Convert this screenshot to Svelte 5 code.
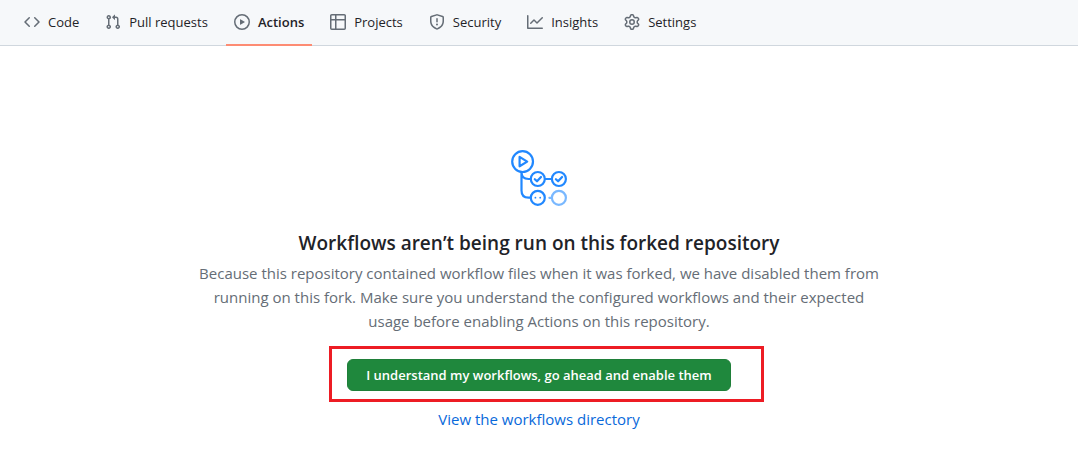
<script>
  const tabs = [
    { label: 'Code', d: 'M4.72 3.22a.75.75 0 011.06 1.06L2.06 8l3.72 3.72a.75.75 0 11-1.06 1.06L.47 8.53a.75.75 0 010-1.06l4.25-4.25zm6.56 0a.75.75 0 10-1.06 1.06L13.94 8l-3.72 3.72a.75.75 0 101.06 1.06l4.25-4.25a.75.75 0 000-1.06l-4.25-4.25z' },
    { label: 'Pull requests', d: 'M7.177 3.073L9.573.677A.25.25 0 0110 .854v4.792a.25.25 0 01-.427.177L7.177 3.427a.25.25 0 010-.354zM3.75 2.5a.75.75 0 100 1.5.75.75 0 000-1.5zm-2.25.75a2.25 2.25 0 113 2.122v5.256a2.251 2.251 0 11-1.5 0V5.372A2.25 2.25 0 011.5 3.25zM11 2.5h-1V4h1a1 1 0 011 1v5.628a2.251 2.251 0 101.5 0V5A2.5 2.5 0 0011 2.5zm1 10.25a.75.75 0 111.5 0 .75.75 0 01-1.5 0zM3.75 12a.75.75 0 100 1.5.75.75 0 000-1.5z' },
    { label: 'Actions', current: true, d: 'M1.5 8a6.5 6.5 0 1113 0 6.5 6.5 0 01-13 0zM8 0a8 8 0 100 16A8 8 0 008 0zM6.379 5.227A.25.25 0 006 5.442v5.117a.25.25 0 00.379.214l4.264-2.559a.25.25 0 000-.428L6.379 5.227z' },
    { label: 'Projects', d: 'M0 1.75C0 .784.784 0 1.75 0h12.5C15.216 0 16 .784 16 1.75v12.5A1.75 1.75 0 0114.25 16H1.75A1.75 1.75 0 010 14.25ZM6.5 6.5v8h7.75a.25.25 0 00.25-.25V6.5Zm8-1.5V1.75a.25.25 0 00-.25-.25H6.5V5Zm-13 1.5v7.75c0 .138.112.25.25.25H5v-8ZM5 5V1.5H1.75a.25.25 0 00-.25.25V5Z' },
    { label: 'Security', d: 'M7.467.133a1.75 1.75 0 011.066 0l5.25 1.68A1.75 1.75 0 0115 3.48V7c0 1.566-.32 3.182-1.303 4.682-.983 1.498-2.585 2.813-5.032 3.855a1.7 1.7 0 01-1.33 0c-2.447-1.042-4.049-2.357-5.032-3.855C1.32 10.182 1 8.566 1 7V3.48a1.75 1.75 0 011.217-1.667l5.25-1.68zm.61 1.429a.25.25 0 00-.153 0l-5.25 1.68a.25.25 0 00-.174.238V7c0 1.358.275 2.666 1.057 3.86.784 1.194 2.121 2.34 4.366 3.297a.2.2 0 00.154 0c2.245-.956 3.582-2.104 4.366-3.298C13.225 9.666 13.5 8.36 13.5 7V3.48a.25.25 0 00-.174-.237l-5.25-1.68zM9 10.5a1 1 0 11-2 0 1 1 0 012 0zm-.25-5.75a.75.75 0 10-1.5 0v3a.75.75 0 001.5 0v-3z' },
    { label: 'Insights', d: 'M1.5 1.75a.75.75 0 00-1.5 0v12.5c0 .414.336.75.75.75h14.5a.75.75 0 000-1.5H1.5V1.75zm14.28 2.53a.75.75 0 00-1.06-1.06L10 7.94 7.53 5.47a.75.75 0 00-1.06 0L3.22 8.72a.75.75 0 001.06 1.06L7 7.06l2.47 2.47a.75.75 0 001.06 0l5.25-5.25z' },
    { label: 'Settings', d: 'M7.429 1.525a6.593 6.593 0 011.142 0c.036.003.108.036.137.146l.289 1.105c.147.56.55.967.997 1.189.174.086.341.183.501.29.417.278.97.423 1.53.27l1.102-.303c.11-.03.175.016.195.046.219.31.41.641.573.989.014.031.022.11-.059.19l-.815.806c-.411.406-.562.957-.53 1.456a4.588 4.588 0 010 .582c-.032.499.119 1.05.53 1.456l.815.806c.08.08.073.159.059.19a6.494 6.494 0 01-.573.99c-.02.029-.086.074-.195.045l-1.103-.303c-.559-.153-1.112-.008-1.529.27-.16.107-.327.204-.5.29-.449.222-.851.628-.998 1.189l-.289 1.105c-.029.11-.101.143-.137.146a6.613 6.613 0 01-1.142 0c-.036-.003-.108-.037-.137-.146l-.289-1.105c-.147-.56-.55-.967-.997-1.189a4.502 4.502 0 01-.501-.29c-.417-.278-.97-.423-1.53-.27l-1.102.303c-.11.03-.175-.016-.195-.046a6.492 6.492 0 01-.573-.989c-.014-.031-.022-.11.059-.19l.815-.806c.411-.406.562-.957.53-1.456a4.587 4.587 0 010-.582c.032-.499-.119-1.05-.53-1.456l-.815-.806c-.08-.08-.073-.159-.059-.19a6.44 6.44 0 01.573-.99c.02-.029.086-.075.195-.045l1.103.303c.559.153 1.112.008 1.529-.27.16-.107.327-.204.5-.29.449-.222.851-.628.998-1.189l.289-1.105c.029-.11.101-.143.137-.146zM8 0c-.236 0-.47.01-.701.03-.743.065-1.29.615-1.458 1.261l-.29 1.106c-.017.066-.078.158-.211.224a5.994 5.994 0 00-.668.386c-.123.082-.233.09-.3.071L3.27 2.776c-.644-.177-1.392.02-1.82.63a7.977 7.977 0 00-.704 1.217c-.315.675-.111 1.422.363 1.891l.815.806c.05.048.098.147.088.294a6.084 6.084 0 000 .772c.01.147-.038.246-.088.294l-.815.806c-.474.469-.678 1.216-.363 1.891.2.428.436.835.704 1.218.428.609 1.176.806 1.82.63l1.103-.303c.066-.019.176-.011.299.071.213.143.436.272.668.386.133.066.194.158.212.224l.289 1.106c.169.646.715 1.196 1.458 1.26a8.094 8.094 0 001.402 0c.743-.064 1.29-.614 1.458-1.26l.29-1.106c.017-.066.078-.158.211-.224a5.98 5.98 0 00.668-.386c.123-.082.233-.09.3-.071l1.102.302c.644.177 1.392-.02 1.82-.63.268-.382.505-.789.704-1.217.315-.675.111-1.422-.364-1.891l-.814-.806c-.05-.048-.098-.147-.088-.294a6.1 6.1 0 000-.772c-.01-.147.039-.246.088-.294l.814-.806c.475-.469.679-1.216.364-1.891a7.992 7.992 0 00-.704-1.218c-.428-.609-1.176-.806-1.82-.63l-1.103.303c-.066.019-.176.011-.299-.071a5.991 5.991 0 00-.668-.386c-.133-.066-.194-.158-.212-.224L10.16 1.29C9.99.645 9.444.095 8.701.031A8.094 8.094 0 008 0zm1.5 8a1.5 1.5 0 11-3 0 1.5 1.5 0 013 0zM11 8a3 3 0 11-6 0 3 3 0 016 0z' }
  ];
</script>

<nav class="tabs">
  {#each tabs as tab}
    <a class="tab" class:current={tab.current} href="#top" aria-current={tab.current ? 'page' : undefined}>
      <svg width="16" height="16" viewBox="0 0 16 16" aria-hidden="true"><path fill-rule="evenodd" d={tab.d} /></svg>
      <span>{tab.label}</span>
    </a>
  {/each}
</nav>

<main class="blank">
  <svg class="hero" width="56" height="56" viewBox="0 0 56 56" fill="none" stroke="#2188ff" stroke-width="2.2" stroke-linecap="round" stroke-linejoin="round" aria-hidden="true">
    <circle cx="11.6" cy="11.6" r="10.4" />
    <path d="M8.6 6.9v9.4l7.6-4.7z" />
    <path d="M10.5 22v18.5c0 4.5 2.7 7.2 7 7.2h2M10.5 22c0 4.5 2.7 7 7 7h2M34 29h7" />
    <circle cx="26.8" cy="29" r="7" />
    <circle cx="47.9" cy="29" r="7" />
    <path d="M23.8 29.2l2.2 2.1 4-4.3M44.9 29.2l2.2 2.1 4-4.3" />
    <circle cx="26.8" cy="47.8" r="7" />
    <path d="M24.4 47.7h.01M29.2 47.7h.01" stroke-width="1.8" />
    <g stroke="#79b8ff"><circle cx="47.9" cy="47.8" r="7" /><path d="M38.4 47.8h1.6" /></g>
  </svg>
  <h1>Workflows aren’t being run on this forked repository</h1>
  <p>
    Because this repository contained workflow files when it was forked, we have disabled them from
    running on this fork. Make sure you understand the configured workflows and their expected
    usage before enabling Actions on this repository.
  </p>
  <div class="action">
    <button type="button">I understand my workflows, go ahead and enable them</button>
  </div>
  <a class="directory" href="#top">View the workflows directory</a>
</main>

<style>
  :global(body) {
    margin: 0;
    background: #fff;
    color: #1f2328;
    font-family: 'Open Sans', 'Noto Sans', sans-serif;
  }
  .tabs {
    display: flex;
    gap: 10px;
    padding: 0 16px;
    background: #f6f8fa;
    border-bottom: 1px solid #d0d7de;
  }
  .tab {
    display: flex;
    align-items: center;
    gap: 8px;
    height: 44px;
    margin-bottom: -1px;
    padding: 0 8px;
    border-bottom: 2px solid transparent;
    color: #1f2328;
    font-size: 13px;
    line-height: 20px;
    text-decoration: none;
    white-space: nowrap;
  }
  .tab svg {
    fill: #656d76;
  }
  .current {
    border-bottom-color: #fd8c73;
    font-weight: 600;
  }
  .blank {
    display: flex;
    flex-direction: column;
    align-items: center;
    padding: 104px 32px 32px;
    text-align: center;
  }
  .hero {
    margin-bottom: 21px;
  }
  h1 {
    margin: 0 0 2px;
    font-size: 19px;
    font-weight: 600;
    line-height: 32px;
  }
  p {
    max-width: 688px;
    margin: 0 0 26px;
    color: #656d76;
    font-size: 15px;
    line-height: 24px;
  }
  .action {
    position: relative;
    margin-bottom: 16px;
  }
  .action::after {
    content: '';
    position: absolute;
    inset: -13px -33px -11px -18px;
    border: 3px solid #ed1c24;
    pointer-events: none;
  }
  button {
    display: block;
    height: 32px;
    padding: 0 18px;
    border: 1px solid #1f7f39;
    border-radius: 6px;
    background: #1f883d;
    color: #fff;
    font: 600 13px/20px 'Open Sans', 'Noto Sans', sans-serif;
  }
  .directory {
    color: #0969da;
    font-size: 15px;
    line-height: 24px;
    text-decoration: none;
  }
</style>
